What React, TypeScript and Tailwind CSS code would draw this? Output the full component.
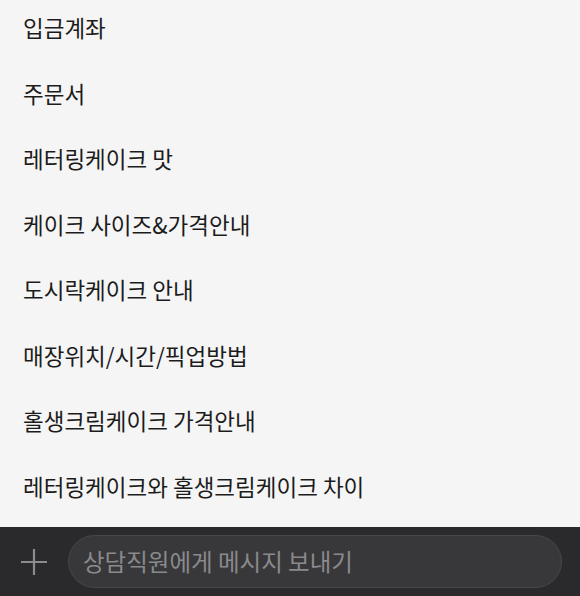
const menus = [
  "입금계좌",
  "주문서",
  "레터링케이크 맛",
  "케이크 사이즈&가격안내",
  "도시락케이크 안내",
  "매장위치/시간/픽업방법",
  "홀생크림케이크 가격안내",
  "레터링케이크와 홀생크림케이크 차이",
];

export default function App() {
  return (
    <div
      className="flex h-[596px] w-[580px] flex-col overflow-hidden bg-[#f5f5f5]"
      style={{ fontFamily: '"Noto Sans CJK KR", "Noto Sans", sans-serif' }}
    >
      <ul className="-mt-[5px] flex-1">
        {menus.map((label) => (
          <li
            key={label}
            className="flex h-[65.6px] items-center pl-[23px] text-[22.5px] text-[#1c1c1c]"
          >
            {label}
          </li>
        ))}
      </ul>

      <div className="flex h-[69px] items-center bg-[#2a2a2c] pr-[18px]">
        <button type="button" className="flex w-[68px] items-center justify-center pr-[1px]">
          <svg width="28" height="28" viewBox="0 0 28 28" fill="none">
            <path d="M14 1v26M1 14h26" stroke="#8c8c8e" strokeWidth="2.2" />
          </svg>
        </button>
        <div className="flex h-[53px] flex-1 items-center rounded-full border border-[#47474a] bg-[#38383a] px-[14px]">
          <span className="text-[23.5px] text-[#8a8a8c]">
            상담직원에게 메시지 보내기
          </span>
        </div>
      </div>
    </div>
  );
}
